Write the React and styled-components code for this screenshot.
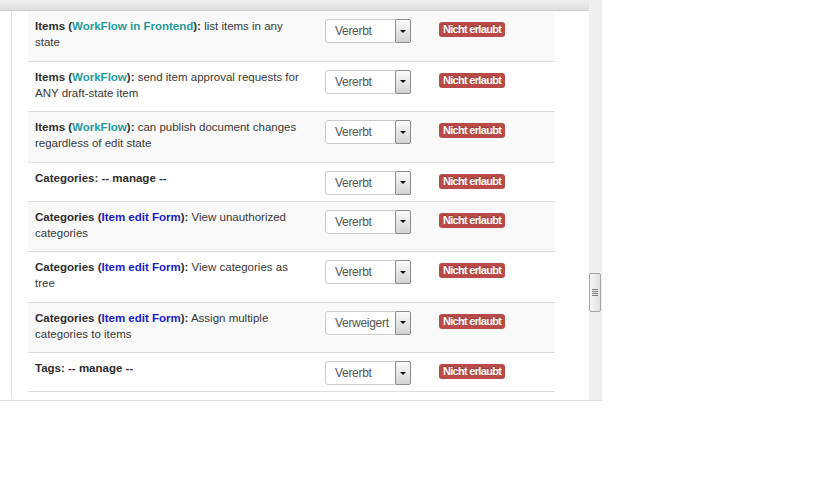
import React from 'react'
import styled, { createGlobalStyle } from 'styled-components'

const GlobalStyle = createGlobalStyle`
  body {
    margin: 0;
    background: #fff;
    font-family: "Liberation Sans", Arial, sans-serif;
  }
`

const Frame = styled.div`
  display: flex;
  width: 602px;
  height: 400px;
  border-bottom: 1px solid #dcdcdc;
  overflow: hidden;
`
const Viewport = styled.div`
  flex: 1;
  min-width: 0;
  display: flex;
  flex-direction: column;
`
const Shade = styled.div`
  flex-shrink: 0;
  height: 10px;
  background: linear-gradient(#eeeeee, #dfdfdf);
  border-bottom: 1px solid #cbcbcb;
`
const Body = styled.div`
  flex: 1;
  min-height: 0;
  display: flex;
  padding: 0 0 3px 11px;
`
const Panel = styled.div`
  flex: 1;
  border-left: 1px solid #e2e2e2;
  padding-left: 16px;
  overflow: hidden;
`
const Table = styled.div`
  width: 527px;
`
const Row = styled.div`
  display: grid;
  grid-template-columns: 289px 114px 124px;
  box-sizing: border-box;
  height: ${p => (p.$tall ? '50.5px' : '39px')};
  border-bottom: 1px solid #dddddd;
  background: ${p => (p.$striped ? '#f9f9f9' : '#fff')};
`
const TextCell = styled.div`
  padding: 7px 17px 0 7px;
  font-size: 11.5px;
  line-height: 16px;
  color: #383838;
`
const Strong = styled.b`
  color: #2e2e2e;
  font-weight: bold;
`
const Ctx = styled.span`
  color: ${p => (p.$tone === 'blue' ? '#1a1acc' : '#1f9c9c')};
`
const Cell = styled.div`
  padding: 8px 0 0 8px;
`
const SelectBox = styled.div`
  display: flex;
  align-items: center;
  box-sizing: border-box;
  width: 86px;
  height: 24px;
  padding-left: 9px;
  border: 1px solid #cccccc;
  border-radius: 3px;
  background: #fff;
  font-size: 12px;
  letter-spacing: -0.3px;
  color: #555;
`
const SelectArrow = styled.span`
  display: flex;
  align-items: center;
  justify-content: center;
  align-self: stretch;
  width: 14px;
  margin: -1px -1px -1px auto;
  border: 1px solid #8c8c8c;
  border-radius: 2px;
  background: linear-gradient(#fbfbfb, #d2d2d2);
  &::after {
    content: '';
    border-left: 3px solid transparent;
    border-right: 3px solid transparent;
    border-top: 3px solid #111;
  }
`
const Badge = styled.span`
  display: inline-block;
  box-sizing: border-box;
  height: 15px;
  line-height: 15px;
  padding: 0 4px;
  border-radius: 3px;
  background: #b94a48;
  color: #fff;
  font-size: 11px;
  font-weight: bold;
  letter-spacing: -0.7px;
  text-shadow: 0 -1px 0 rgba(0, 0, 0, 0.25);
`
const Track = styled.div`
  position: relative;
  flex-shrink: 0;
  width: 13px;
  background: #f0f0f0;
`
const Thumb = styled.div`
  position: absolute;
  top: 273px;
  left: 0;
  display: flex;
  align-items: center;
  justify-content: center;
  box-sizing: border-box;
  width: 12px;
  height: 39px;
  border: 1px solid #a6a6a6;
  border-radius: 2px;
  background: linear-gradient(to right, #f6f6f6, #e2e2e2);
`
const Grip = styled.span`
  width: 6px;
  height: 7px;
  background: repeating-linear-gradient(to bottom, #7c7c7c 0 1px, transparent 1px 2px);
`

const rows = [
  { entity: 'Items', ctx: 'WorkFlow in Frontend', tone: 'teal', desc: 'list items in any state' },
  { entity: 'Items', ctx: 'WorkFlow', tone: 'teal', desc: 'send item approval requests for ANY draft-state item' },
  { entity: 'Items', ctx: 'WorkFlow', tone: 'teal', desc: 'can publish document changes regardless of edit state' },
  { entity: 'Categories', manage: true },
  { entity: 'Categories', ctx: 'Item edit Form', tone: 'blue', desc: 'View unauthorized categories' },
  { entity: 'Categories', ctx: 'Item edit Form', tone: 'blue', desc: 'View categories as tree' },
  { entity: 'Categories', ctx: 'Item edit Form', tone: 'blue', desc: 'Assign multiple categories to items', value: 'Verweigert' },
  { entity: 'Tags', manage: true },
]

function PermissionRow({ row, index }) {
  return (
    <Row $tall={!row.manage} $striped={index % 2 === 0}>
      <TextCell>
        {row.manage ? (
          <Strong>{row.entity}: -- manage --</Strong>
        ) : (
          <>
            <Strong>
              {row.entity} (<Ctx $tone={row.tone}>{row.ctx}</Ctx>):
            </Strong>{' '}
            {row.desc}
          </>
        )}
      </TextCell>
      <Cell>
        <SelectBox>
          {row.value || 'Vererbt'}
          <SelectArrow />
        </SelectBox>
      </Cell>
      <Cell>
        <Badge>Nicht erlaubt</Badge>
      </Cell>
    </Row>
  )
}

export default function App() {
  return (
    <>
      <GlobalStyle />
      <Frame>
        <Viewport>
          <Shade />
          <Body>
            <Panel>
              <Table>
                {rows.map((row, i) => (
                  <PermissionRow key={i} row={row} index={i} />
                ))}
              </Table>
            </Panel>
          </Body>
        </Viewport>
        <Track>
          <Thumb>
            <Grip />
          </Thumb>
        </Track>
      </Frame>
    </>
  )
}
